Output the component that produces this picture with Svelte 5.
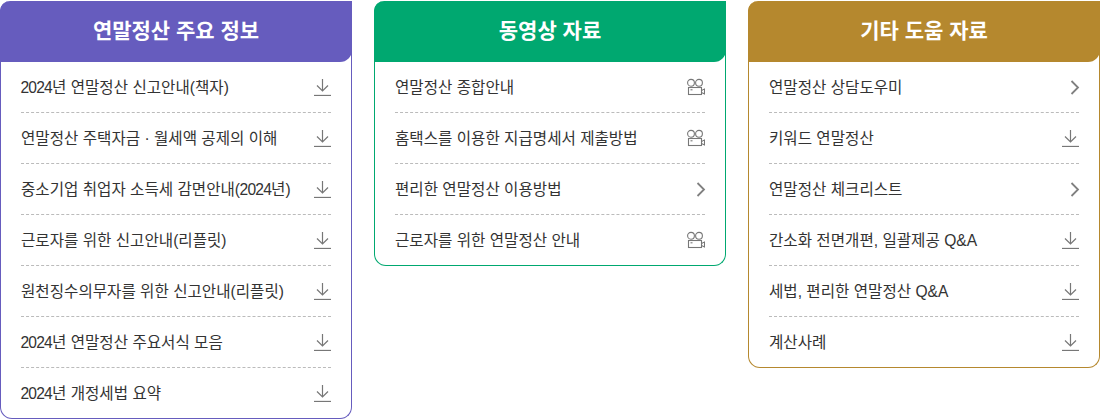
<script>
	const sections = [
		{
			title: '연말정산 주요 정보',
			tone: 'purple',
			items: [
				['2024년 연말정산 신고안내(책자)', 'down'],
				['연말정산 주택자금 · 월세액 공제의 이해', 'down'],
				['중소기업 취업자 소득세 감면안내(2024년)', 'down'],
				['근로자를 위한 신고안내(리플릿)', 'down'],
				['원천징수의무자를 위한 신고안내(리플릿)', 'down'],
				['2024년 연말정산 주요서식 모음', 'down'],
				['2024년 개정세법 요약', 'down']
			]
		},
		{
			title: '동영상 자료',
			tone: 'green',
			items: [
				['연말정산 종합안내', 'video'],
				['홈택스를 이용한 지급명세서 제출방법', 'video'],
				['편리한 연말정산 이용방법', 'arrow'],
				['근로자를 위한 연말정산 안내', 'video']
			]
		},
		{
			title: '기타 도움 자료',
			tone: 'gold',
			items: [
				['연말정산 상담도우미', 'arrow'],
				['키워드 연말정산', 'down'],
				['연말정산 체크리스트', 'arrow'],
				['간소화 전면개편, 일괄제공 Q&A', 'down'],
				['세법, 편리한 연말정산 Q&A', 'down'],
				['계산사례', 'down']
			]
		}
	];

	// year digits sit tighter than the hangul around them
	const split = (label) => label.split(/(\d+)/);
</script>

<div class="boards">
	{#each sections as section}
		<section class="board {section.tone}">
			<h2 class="board__title">{section.title}</h2>
			<ul class="board__list">
				{#each section.items as [label, icon]}
					<li class="board__item">
						<span class="board__label">{#each split(label) as part, i}{#if i % 2}<span class="board__year">{part}</span>{:else}{part}{/if}{/each}</span>
						{#if icon === 'down'}
							<svg width="18" height="18" viewBox="0 0 18 18" fill="none" stroke="#777" stroke-width="1.2">
								<path d="M9.500 1v12M4 7.500l5.500 5.500L15 7.500" />
								<path d="M1 17.500h17" stroke-width="1.3" />
							</svg>
						{:else if icon === 'video'}
							<svg width="18" height="18" viewBox="0 0 18 18" fill="none" stroke="#777" stroke-width="1.1">
								<circle cx="4" cy="4.800" r="3.400" />
								<circle cx="12" cy="4.800" r="3.400" />
								<rect x="1.500" y="9.500" width="13" height="7" />
								<path d="M14.500 12.500l3-1.500v5l-3-1.500" />
								<path d="M3.500 11.800h2" />
							</svg>
						{:else}
							<svg class="board__chevron" width="18" height="18" viewBox="0 0 18 18" fill="none" stroke="#808080" stroke-width="1.800">
								<path d="M9.500 3 16 9.500 9.500 16" />
							</svg>
						{/if}
					</li>
				{/each}
			</ul>
		</section>
	{/each}
</div>

<style>
	:global(body) {
		background: #fff;
	}
	.boards {
		display: flex;
		align-items: flex-start;
		gap: 22px;
		width: 1100px;
		padding-top: 1px;
		font-family: 'Liberation Sans', 'Noto Sans CJK KR', sans-serif;
	}
	.board {
		flex: 0 0 352px;
		box-sizing: border-box;
		border: 1px solid var(--tone);
		border-top: 0;
		border-radius: 10px 0 12px 12px;
	}
	.purple {
		--tone: #665cbe;
	}
	.green {
		--tone: #00a870;
	}
	.gold {
		--tone: #b5882e;
	}
	.board__title {
		margin: 0 -1px;
		height: 61px;
		line-height: 60px;
		text-align: center;
		font-size: 21px;
		font-weight: 700;
		color: #fff;
		background: var(--tone);
		border-radius: 10px 0 12px 0;
	}
	.board__list {
		list-style: none;
		margin: 0;
		padding: 0 20px;
	}
	.board__item {
		display: flex;
		align-items: center;
		justify-content: space-between;
		height: 51px;
		box-sizing: border-box;
		border-bottom: 1px dashed #bbb;
		font-size: 15.600px;
		color: #333;
	}
	.board__item:last-child {
		border-bottom: 0;
		height: 50px;
	}
	.board__label {
		margin-bottom: 2px;
	}
	.board__year {
		letter-spacing: -0.8px;
		margin-left: -0.5px;
	}
	.board__chevron {
		margin-right: -1px;
	}
</style>
